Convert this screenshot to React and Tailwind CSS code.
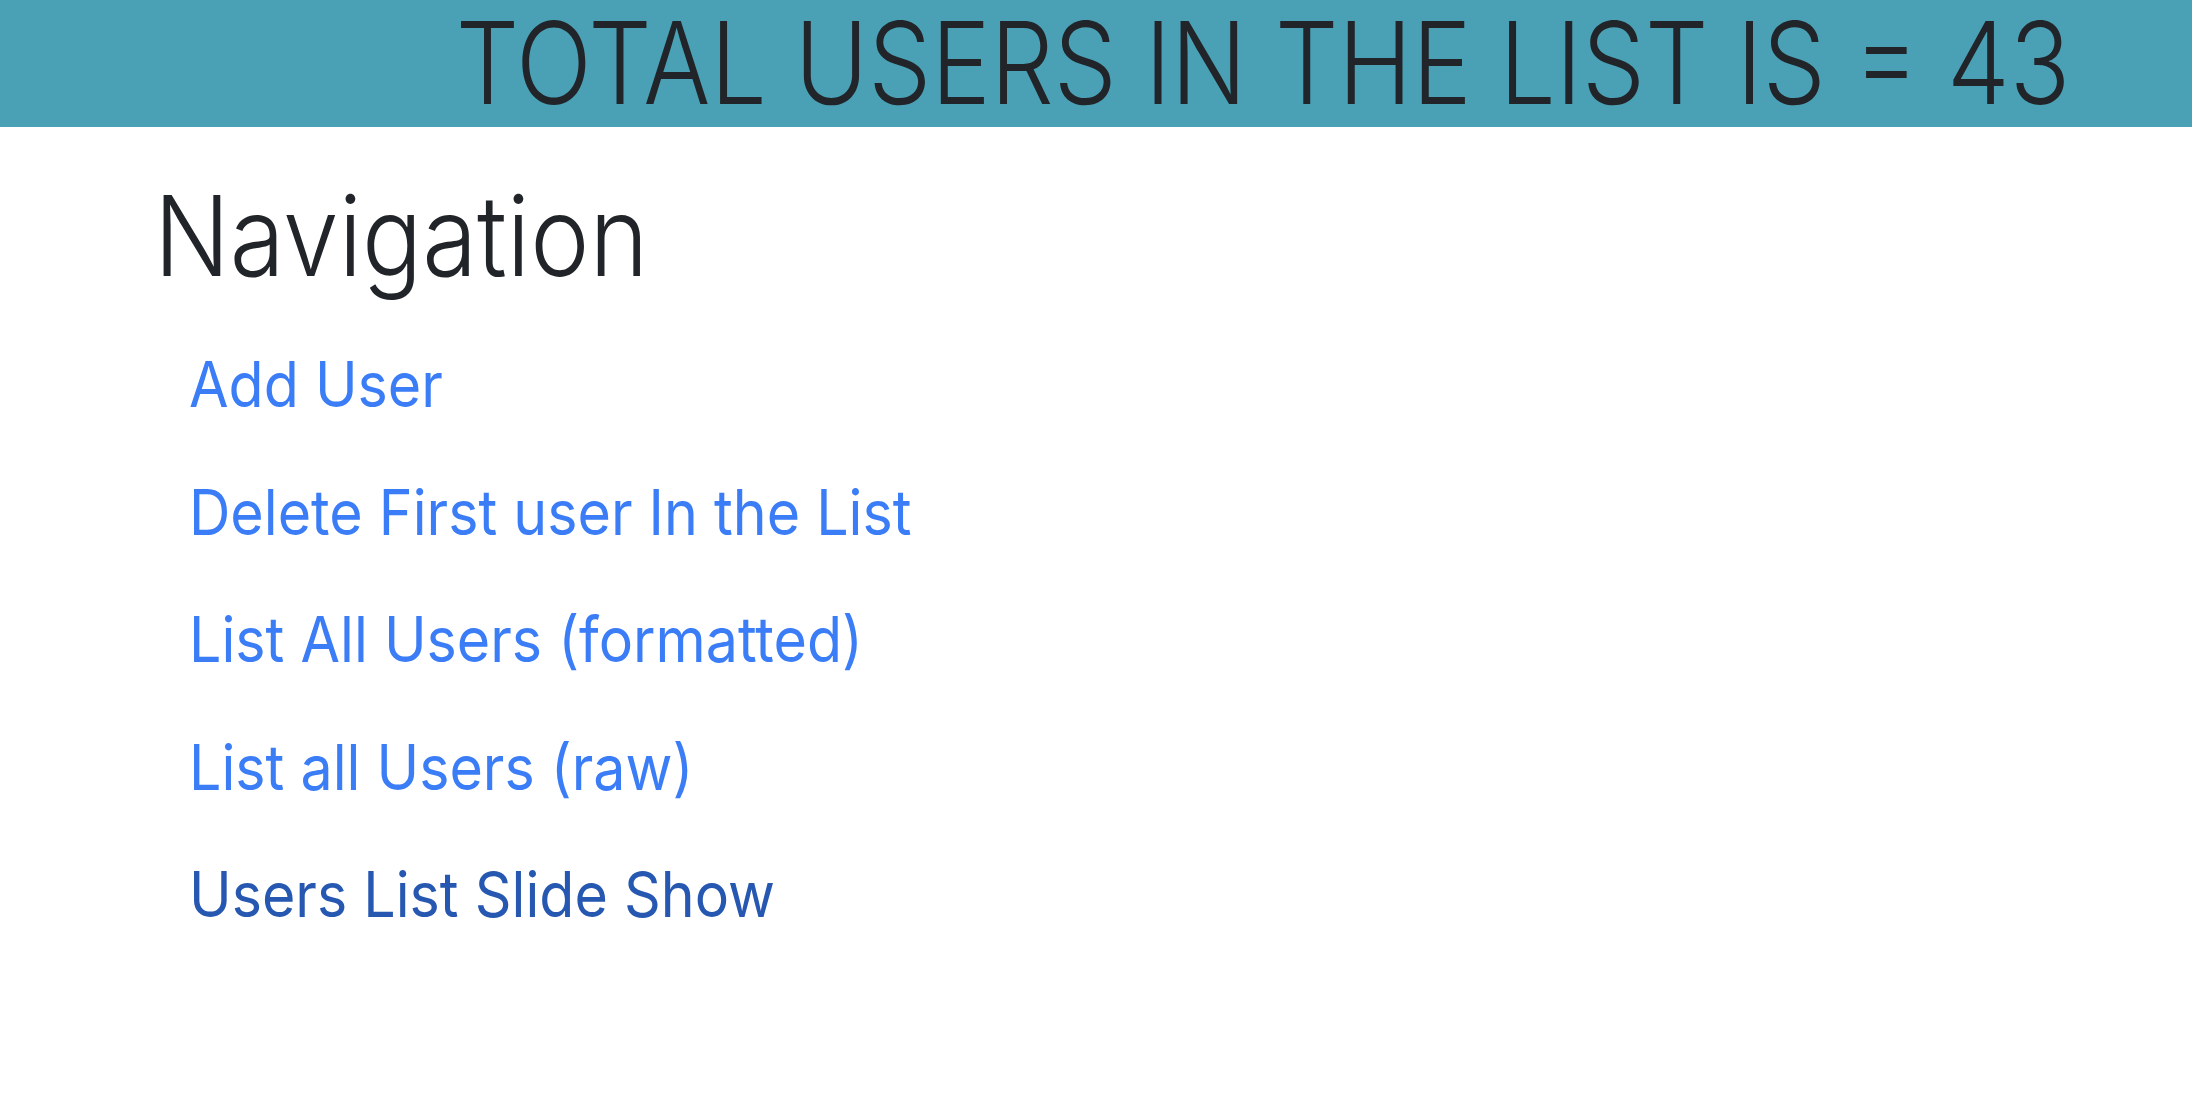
const links = [
  { label: "Add User", active: false },
  { label: "Delete First user In the List", active: false },
  { label: "List All Users (formatted)", active: false },
  { label: "List all Users (raw)", active: false },
  { label: "Users List Slide Show", active: true },
];

export default function App() {
  return (
    <div className="min-h-screen bg-white font-['Inter',sans-serif] text-[#212529]">
      {/* top banner with the user count */}
      <header className="h-[127px] bg-[#4aa0b5] flex justify-end pr-[122px] pt-[6px]">
        <h1 className="text-[114px] leading-none font-light whitespace-nowrap scale-x-[0.875] origin-right">
          TOTAL USERS IN THE LIST IS = 43
        </h1>
      </header>

      <main className="pl-[154px] pt-[53px]">
        <h2 className="text-[111px] leading-none font-light scale-x-[0.9] origin-left">
          Navigation
        </h2>
        <ul className="mt-[30px] pl-[35px] flex flex-col">
          {links.map((link) => (
            <li key={link.label} className="h-[127.5px] leading-[127.5px]">
              <a
                href="#"
                className={`inline-block text-[63px] whitespace-nowrap scale-x-[0.91] origin-left ${
                  link.active ? "text-[#2657b1]" : "text-[#3b7df6]"
                }`}
              >
                {link.label}
              </a>
            </li>
          ))}
        </ul>
      </main>
    </div>
  );
}
